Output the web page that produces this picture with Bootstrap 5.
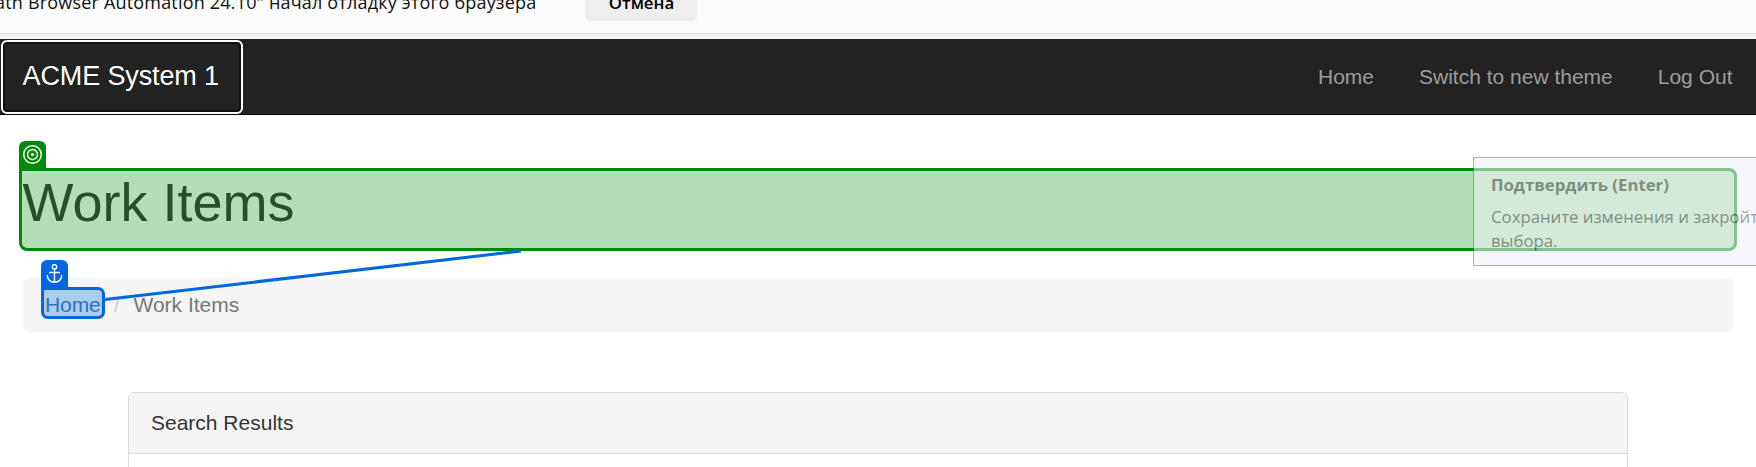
<!DOCTYPE html>
<html lang="ru">
<head>
<meta charset="utf-8">
<title>ACME System 1 - Work Items</title>
<link href="https://cdn.jsdelivr.net/npm/bootstrap@5.3.0/dist/css/bootstrap.min.css" rel="stylesheet">
<style>
body{font:21px/30px "Liberation Sans",sans-serif;color:#333;background:#fff;height:467px;overflow:hidden}
.infobar{height:34px;background:#fbfbfb;border-bottom:1px solid #dcdcdc;font:18px/24px "Open Sans",sans-serif;color:#111;overflow:hidden}
.infobar .msg{margin-top:-10px;margin-left:-5px;height:24px;width:541px;flex:none;letter-spacing:.19px}
.infobar .cancel{margin-left:49px;margin-top:-19px;width:112px;height:40px;border-radius:5px;background:#eee;border:0;padding:0 0 0 1px;font-weight:600;font-size:16.8px;line-height:43px;text-align:center}
.edge{height:5px;background:linear-gradient(#ececec,#f7f7f7)}
.topnav{height:76px;background:#222;border-bottom:1px solid #080808;padding:0;flex-wrap:nowrap}
.topnav .navbar-brand{height:74px;width:242px;margin:1px 0 0 1px;padding:0 0 0 19.5px;font-size:27px;line-height:69px;letter-spacing:-.12px;color:#fff;border:2px solid #fff;border-radius:6px;box-shadow:inset 0 0 0 2px #101010;flex:none}
.topnav .nav-link{color:#9d9d9d;padding:0 22.5px;line-height:75px}
.topnav .nav{margin-right:1px}
.page-title{margin:53px 19px 0;height:83px;border:3px solid #008a09;border-radius:0 8px 8px 8px;background:#b4deb5;position:relative}
.page-title h1{font-size:54px;line-height:60px;font-weight:400;color:#275027;margin:1px 0 0 .5px}
.tag{position:absolute;width:27px;height:30px;left:-3px;bottom:100%;border-radius:6px 6px 0 0;display:block}
.crumbs{margin:27px 23px 0;height:54px;background:#f5f5f5;border-radius:6px;color:#777;padding-left:18px}
.anchor-link{position:relative;width:64px;height:32px;border:3px solid #0067df;border-radius:0 7px 7px 7px;background:#adcbef;color:#2a75bc;line-height:29px;padding-left:1px;margin-bottom:4px;letter-spacing:-.1px}
.sep{color:#ccc;margin-left:9px;width:19.5px}
.results{margin:60px 128px 0;border:1px solid #ddd;border-bottom:0;border-radius:6px 6px 0 0;height:75px}
.results .card-header{height:61px;background:#f5f5f5;border-bottom:1px solid #ddd;padding:0 22px;line-height:60px}
.connector{position:absolute;left:104px;top:249px;z-index:3}
.hint{position:absolute;left:1473px;top:157px;width:283px;height:109px;border:1px solid #6f6f6f;border-right:0;background:#f0f2fa;opacity:.55;z-index:4;font:16.75px/24px "Open Sans",sans-serif;color:#505050;padding:15px 0 0 17px;overflow:hidden}
</style>
</head>
<body class="position-relative">
<div class="infobar d-flex"><div class="msg text-nowrap">ath Browser Automation 24.10" начал отладку этого браузера</div><button class="cancel">Отмена</button></div>
<div class="edge"></div>
<nav class="navbar topnav align-items-start">
  <a class="navbar-brand" href="#">ACME System 1</a>
  <div class="nav ms-auto flex-nowrap"><a class="nav-link" href="#">Home</a><a class="nav-link" href="#">Switch to new theme</a><a class="nav-link" href="#">Log Out</a></div>
</nav>
<main>
  <div class="page-title">
    <svg class="tag" style="background:#008a09" viewBox="0 0 27 30" fill="none" stroke="#fff"><circle cx="13.5" cy="13.5" r="8.8" stroke-width="1.5"/><circle cx="13.5" cy="13.5" r="5" stroke-width="1.4"/><circle cx="13.5" cy="13.5" r="1.6" fill="#fff" stroke="none"/></svg>
    <h1>Work Items</h1>
  </div>
  <div class="crumbs d-flex align-items-center">
    <div class="anchor-link"><svg class="tag" style="background:#0067df" viewBox="0 0 27 30" fill="none" stroke="#fff" stroke-width="1.4"><circle cx="13.5" cy="6.8" r="2.2"/><path d="M13.5 9v13.5M8 12.5h11M6.2 15.2c.5 4.5 3.5 7 7.3 7s6.8-2.5 7.3-7"/></svg>Home</div>
    <span class="sep">/</span><span>Work Items</span>
  </div>
  <div class="card results"><div class="card-header">Search Results</div></div>
</main>
<svg class="connector" width="420" height="54"><path d="M1 50.5L417 2" stroke="#0067df" stroke-width="3"/></svg>
<div class="hint text-nowrap"><strong class="d-block mb-2">Подтвердить (Enter)</strong>Сохраните изменения и закройте<br>выбора.</div>
</body>
</html>
